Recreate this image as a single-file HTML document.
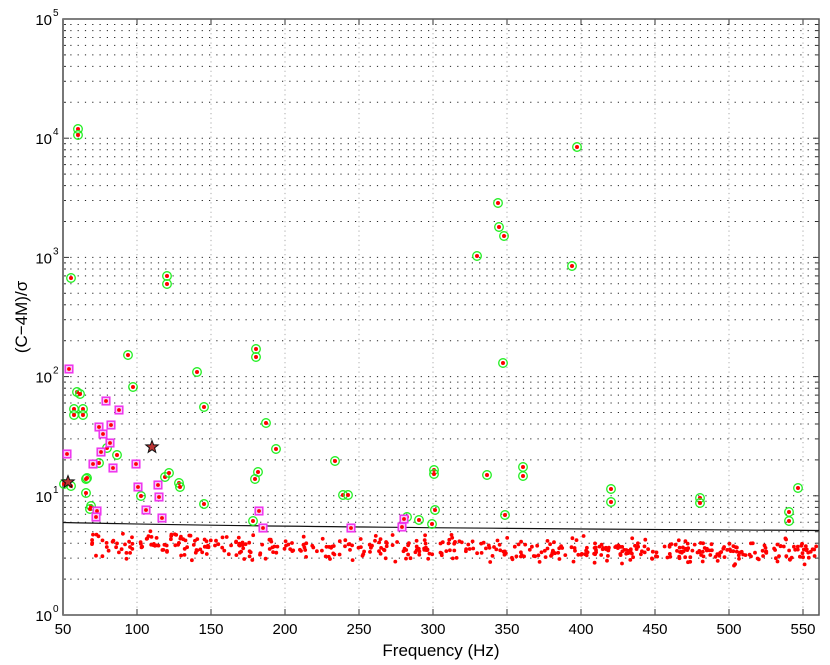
<!DOCTYPE html>
<html><head><meta charset="utf-8"><style>
body{margin:0;background:#fff;width:830px;height:665px;overflow:hidden}
svg{display:block;font-family:"Liberation Sans",sans-serif}
</style></head><body>
<svg id="s" width="830" height="665" xmlns="http://www.w3.org/2000/svg"></svg>
<script>
var L=63,R=819,T=19,B=615,D=119.2;
function X(f){return L+(f-50)*1.48;}
function Y(v){return B-D*Math.log10(v);}
var h='';
for(var k=0;k<5;k++)for(var m=1;m<10;m++){var y=Y(m*Math.pow(10,k));if(y<T+0.5)continue;
 h+='<line x1="'+L+'" x2="'+R+'" y1="'+y.toFixed(1)+'" y2="'+y.toFixed(1)+'" stroke="#222" stroke-width="1" stroke-dasharray="1.2,6.1"/>';}
for(var f=100;f<=550;f+=50){var x=X(f).toFixed(1);
 h+='<line x1="'+x+'" x2="'+x+'" y1="'+T+'" y2="'+B+'" stroke="#aaa" stroke-width="1" stroke-dasharray="1.2,3.5"/>';}
for(var k=0;k<=5;k++)for(var m=1;m<10;m++){var v=m*Math.pow(10,k);var y=Y(v);if(y<T-0.5)break;var len=m==1?6:3;
 h+='<line x1="'+L+'" x2="'+(L+len)+'" y1="'+y.toFixed(1)+'" y2="'+y.toFixed(1)+'" stroke="#333"/>';
 h+='<line x1="'+(R-len)+'" x2="'+R+'" y1="'+y.toFixed(1)+'" y2="'+y.toFixed(1)+'" stroke="#333"/>';if(k==5)break;}
for(var f=50;f<=550;f+=50){var x=X(f).toFixed(1);
 h+='<line x1="'+x+'" x2="'+x+'" y1="'+(B-6)+'" y2="'+B+'" stroke="#333"/><line x1="'+x+'" x2="'+x+'" y1="'+T+'" y2="'+(T+6)+'" stroke="#333"/>';
 h+='<text x="'+x+'" y="634" font-size="15" text-anchor="middle">'+f+'</text>';}
for(var k=0;k<=5;k++){var y=Y(Math.pow(10,k));
 h+='<text x="52" y="'+(y+6)+'" font-size="15" text-anchor="end">10</text><text x="53" y="'+(y-3)+'" font-size="10">'+k+'</text>';}
h+='<rect x="'+L+'" y="'+T+'" width="'+(R-L)+'" height="'+(B-T)+'" fill="none" stroke="#555" stroke-width="1.5"/>';
h+='<line x1="'+L+'" x2="'+L+'" y1="'+T+'" y2="'+B+'" stroke="#777" stroke-width="2"/>';
var seed=7;function rnd(){seed=(seed*16807)%2147483647;return seed/2147483647;}
for(var i=0;i<500;i++){var x=92+rnd()*727;var base=545+(x-92)/727*7;var y=base+(rnd()+rnd()+rnd()-1.5)*11;
 h+='<circle cx="'+x.toFixed(1)+'" cy="'+y.toFixed(1)+'" r="1.9" fill="#f00"/>';}
h+='<path d="M63,522.5 C150,524.5 300,527.5 819,530.5" fill="none" stroke="#111" stroke-width="1.2"/>';
var G=[[78,129],[78,135],[71,278],[167,276],[167,284],[128,355],[197,372],[256,349],[256,357],[133,387],[77,392],[80,394],[74,409],[83,409],[74,415],[83,415],[204,407],[266,423],
[64,484],[71,486],[86,479],[87,478],[86,493],[91,506],[90,509],[99,463],[107,448],[117,455],[141,496],[165,477],[169,473],[179,483],[180,487],[204,504],
[276,449],[335,461],[258,472],[255,479],[343,495],[348,495],[253,521],[407,517],[419,520],[432,524],[434,470],[434,474],[435,510],
[577,147],[498,203],[499,227],[504,236],[477,256],[572,266],[503,363],[487,475],[523,467],[523,476],[505,515],[611,489],[611,502],[700,498],[700,503],[789,512],[789,521],[798,488]];
var M=[[69,369],[106,401],[119,410],[99,427],[111,425],[103,434],[67,454],[110,443],[101,452],[93,464],[113,468],[136,464],[138,487],[158,485],[159,497],[146,510],[97,511],[96,517],[162,518],
[259,511],[263,528],[351,528],[404,519],[402,527]];
G.forEach(function(p){h+='<circle cx="'+p[0]+'" cy="'+p[1]+'" r="4.3" fill="none" stroke="#2e2" stroke-width="1.3"/><circle cx="'+p[0]+'" cy="'+p[1]+'" r="2" fill="#f00"/>';});
M.forEach(function(p){h+='<rect x="'+(p[0]-3.8)+'" y="'+(p[1]-3.8)+'" width="7.6" height="7.6" fill="#f9c4f9" stroke="#e3e" stroke-width="1.5"/><circle cx="'+p[0]+'" cy="'+p[1]+'" r="1.9" fill="#f00"/>';});
function star(cx,cy,r){var s='';for(var i=0;i<10;i++){var a=-Math.PI/2+i*Math.PI/5;var rr=i%2?r*0.42:r;s+=(i?'L':'M')+(cx+rr*Math.cos(a)).toFixed(1)+','+(cy+rr*Math.sin(a)).toFixed(1);}
 return '<path d="'+s+'Z" fill="#b33" stroke="#111" stroke-width="1"/>';}
h+=star(68,482,6.5)+star(152,447,6.5);
h+='<text x="441" y="656" font-size="17" text-anchor="middle">Frequency (Hz)</text>';
h+='<text transform="translate(27,317) rotate(-90)" font-size="17" text-anchor="middle">(C\u22124M)/\u03c3</text>';
document.getElementById('s').innerHTML=h;
</script>
</body></html>
